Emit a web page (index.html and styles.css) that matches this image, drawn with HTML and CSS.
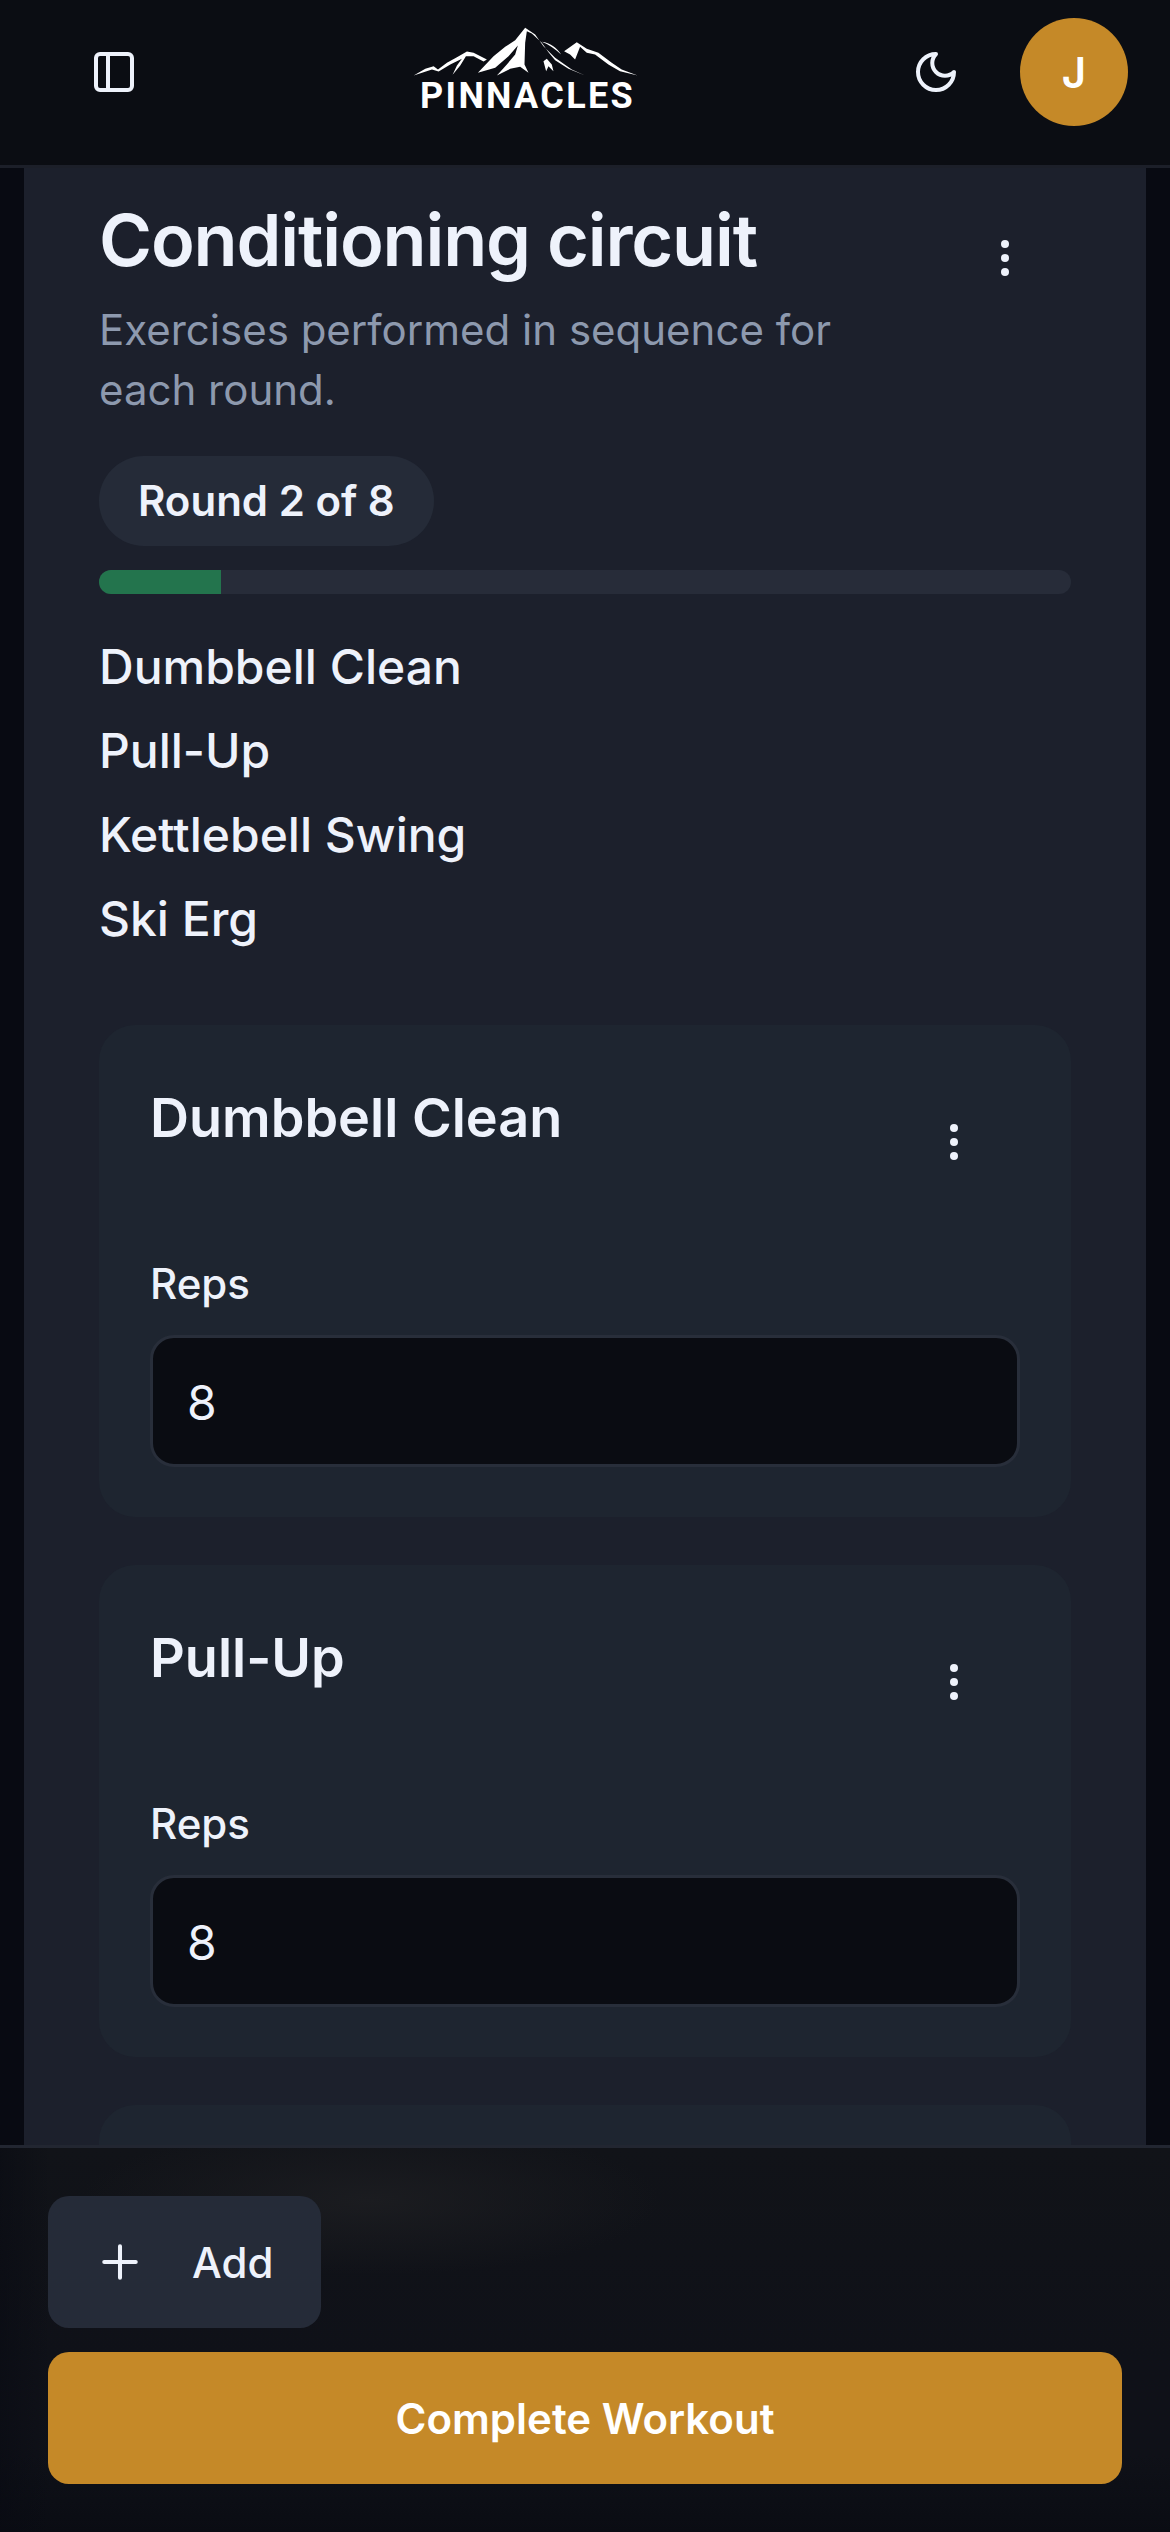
FILE: index.html
```html
<!DOCTYPE html>
<html lang="en">
<head>
<meta charset="utf-8">
<title>Pinnacles</title>
<link rel="stylesheet" href="styles.css">
</head>
<body>
<div class="app">
  <header class="topbar">
    <button class="icon-btn" aria-label="Toggle sidebar">
      <svg class="icon" viewBox="0 0 24 24"><rect x="3" y="3" width="18" height="18" rx="2"/><path d="M9 3v18"/></svg>
    </button>
    <div class="logo">
      <svg class="logo-mark" viewBox="100 50 685 152">
        <path d="M105 198L140 178L165 170L178 180L205 160L235 143L265 126L285 130L325 150L315 156L285 140L262 140L245 168L222 196L235 168L250 148L215 165L180 186L160 180Z"/>
        <path d="M298 190L345 140L380 112L410 92L440 55L470 75L495 110L530 145L580 180L620 198L570 178L530 152L510 128L490 100L460 72L445 65L440 100L438 165L450 190L425 172L395 178L355 198L385 165L410 135L418 108L390 140L350 175Z"/>
        <path d="M495 155L505 148L520 165L525 185L510 170L503 185Z"/>
        <path d="M490 97C515 100 535 115 548 135C530 118 510 105 490 97Z"/>
        <path d="M557 125L595 98L625 118L660 130L700 160L730 180L778 198L725 185L690 165L650 135L625 130L605 112L590 150L575 135Z"/>
      </svg>
      <span class="logo-text">PINNACLES</span>
    </div>
    <button class="icon-btn theme-btn" aria-label="Toggle theme">
      <svg class="icon" viewBox="0 0 24 24"><path d="M12 3a6 6 0 0 0 9 9 9 9 0 1 1-9-9Z"/></svg>
    </button>
    <div class="avatar">J</div>
  </header>

  <main class="content">
    <section class="panel">
      <div class="panel-head">
        <div class="panel-intro">
          <h1 class="panel-title">Conditioning circuit</h1>
          <p class="panel-desc">Exercises performed in sequence for each round.</p>
        </div>
        <button class="menu-btn panel-menu" aria-label="More"><span></span><span></span><span></span></button>
      </div>
      <div class="pill">Round 2 of 8</div>
      <div class="track"><div class="fill" style="width:12.5%"></div></div>
      <ul class="seq">
        <li>Dumbbell Clean</li>
        <li>Pull-Up</li>
        <li>Kettlebell Swing</li>
        <li>Ski Erg</li>
      </ul>

      <article class="card">
        <div class="card-head">
          <h2 class="card-title">Dumbbell Clean</h2>
          <button class="menu-btn" aria-label="More"><span></span><span></span><span></span></button>
        </div>
        <label class="field-label">Reps</label>
        <div class="input">8</div>
      </article>

      <article class="card">
        <div class="card-head">
          <h2 class="card-title">Pull-Up</h2>
          <button class="menu-btn" aria-label="More"><span></span><span></span><span></span></button>
        </div>
        <label class="field-label">Reps</label>
        <div class="input">8</div>
      </article>

      <article class="card">
      </article>
    </section>
  </main>

  <footer class="actions">
    <button class="btn-add">
      <svg class="plus" viewBox="0 0 24 24"><path d="M5 12h14M12 5v14"/></svg>
      <span>Add</span>
    </button>
    <button class="btn-complete">Complete Workout</button>
  </footer>
</div>
</body>
</html>
```
FILE: styles.css
```css
* { box-sizing: border-box; }
html, body { margin: 0; padding: 0; height: 100%; }
body {
  background: #080a12;
  color: #eef2fb;
  font-family: Inter, "Noto Sans", sans-serif;
}
button { font: inherit; color: inherit; border: 0; background: none; padding: 0; }
.app {
  position: relative;
  width: 1170px;
  height: 2532px;
  overflow: hidden;
  display: flex;
  flex-direction: column;
}
.topbar {
  flex: none;
  height: 168px;
  display: flex;
  align-items: flex-start;
  padding: 18px 42px 0 66px;
  background: #0b0d13;
  border-bottom: 3px solid #1c1f29;
}
.icon-btn {
  width: 96px;
  height: 108px;
  display: flex;
  align-items: center;
  justify-content: center;
  flex: none;
}
.icon {
  width: 48px;
  height: 48px;
  fill: none;
  stroke: #eef2fb;
  stroke-width: 2;
  stroke-linecap: round;
  stroke-linejoin: round;
}
.logo {
  width: 290px;
  margin-left: 218px;
  margin-top: 8px;
  display: flex;
  flex-direction: column;
  align-items: center;
}
.logo-mark { width: 228px; height: 51px; fill: #fff; display: block; margin-left: 2px; }
.logo-text {
  font-family: Roboto, "Liberation Sans", sans-serif;
  font-weight: 700;
  font-size: 36px;
  line-height: 32px;
  letter-spacing: 2.3px;
  color: #fff;
  margin: 3px 0 0 5px;
}
.theme-btn { margin-left: auto; margin-right: 36px; }
.avatar {
  width: 108px;
  height: 108px;
  flex: none;
  border-radius: 50%;
  background: #c58928;
  color: #fff;
  font-weight: 600;
  font-size: 42px;
  display: flex;
  align-items: center;
  justify-content: center;
}
.content {
  flex: 1;
  min-height: 0;
  overflow: hidden;
  padding: 0 24px;
}
.panel {
  background: #1c202c;
  padding: 30px 75px 0;
}
.panel-head {
  display: flex;
  justify-content: space-between;
  align-items: flex-start;
}
.panel-intro { width: 780px; }
.panel-title {
  margin: 0;
  font-size: 72px;
  line-height: 84px;
  font-weight: 600;
  letter-spacing: -1.15px;
  color: #eef2fb;
}
.panel-desc {
  margin: 18px 0 0;
  font-size: 42px;
  line-height: 60px;
  color: #8d99ae;
}
.menu-btn {
  flex: none;
  width: 96px;
  height: 96px;
  display: flex;
  flex-direction: column;
  align-items: center;
  justify-content: center;
  gap: 6px;
}
.menu-btn span {
  width: 8px;
  height: 8px;
  border-radius: 50%;
  background: #eef2fb;
}
.panel-menu { margin: 12px 18px 0 0; }
.pill {
  display: inline-block;
  margin-top: 36px;
  height: 90px;
  line-height: 90px;
  padding: 0 39px;
  border-radius: 45px;
  background: #252b38;
  font-size: 42px;
  font-weight: 600;
}
.track {
  margin-top: 24px;
  height: 24px;
  border-radius: 12px;
  background: #272c39;
  overflow: hidden;
}
.fill { height: 100%; background: #23744d; }
.seq {
  list-style: none;
  margin: 31px 0 0;
  padding: 0;
  font-size: 48px;
  line-height: 84px;
  font-weight: 500;
}
.card {
  margin-top: 48px;
  padding: 51px;
  border-radius: 36px;
  background: #1e2530;
  height: 492px;
}
.seq + .card { margin-top: 64px; }
.card-head {
  display: flex;
  justify-content: space-between;
  align-items: flex-start;
  height: 178px;
}
.card-title {
  margin: 6px 0 0;
  font-size: 54px;
  line-height: 72px;
  font-weight: 600;
}
.card-head .menu-btn { margin: 18px 18px 0 0; }
.field-label {
  display: block;
  font-size: 42px;
  line-height: 60px;
  font-weight: 500;
}
.input {
  margin-top: 21px;
  height: 132px;
  line-height: 130px;
  padding: 0 34px;
  border-radius: 24px;
  border: 3px solid #282e3a;
  background: #0a0c12;
  font-size: 48px;
}
.actions {
  position: absolute;
  left: 0;
  right: 0;
  bottom: 0;
  height: 387px;
  padding: 48px;
  display: flex;
  flex-direction: column;
  align-items: flex-start;
  gap: 24px;
  border-top: 3px solid #222631;
  background:
    linear-gradient(90deg, rgba(8, 10, 18, 0.55), rgba(8, 10, 18, 0) 50px),
    radial-gradient(ellipse 290px 75px at 370px 52px, #1b1c20, rgba(27, 28, 32, 0)),
    linear-gradient(#111318, #0f1118 55%, #0f1118 80%, #0a0c13);
}
.btn-add {
  width: 273px;
  height: 132px;
  display: flex;
  align-items: center;
  gap: 45px;
  padding-left: 45px;
  border-radius: 21px;
  background: #252b38;
  font-size: 42px;
  font-weight: 500;
}
.plus {
  width: 54px;
  height: 54px;
  fill: none;
  stroke: #eef2fb;
  stroke-width: 1.8;
  stroke-linecap: round;
}
.btn-complete {
  width: 100%;
  height: 132px;
  border-radius: 21px;
  background: #c58928;
  color: #fff;
  font-size: 42px;
  font-weight: 600;
}
```
